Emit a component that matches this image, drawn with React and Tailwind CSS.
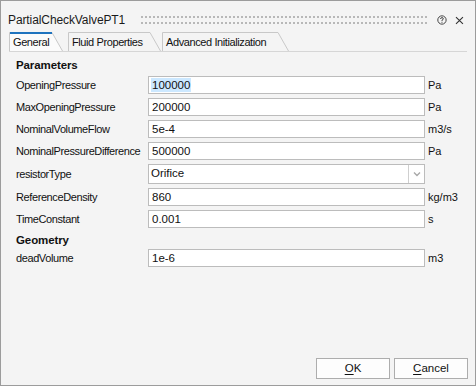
import React from 'react';

const rows = [
  { label: 'OpeningPressure', value: '100000', unit: 'Pa', selected: true },
  { label: 'MaxOpeningPressure', value: '200000', unit: 'Pa' },
  { label: 'NominalVolumeFlow', value: '5e-4', unit: 'm3/s' },
  { label: 'NominalPressureDifference', value: '500000', unit: 'Pa' },
  { label: 'resistorType', value: 'Orifice', combo: true },
  { label: 'ReferenceDensity', value: '860', unit: 'kg/m3' },
  { label: 'TimeConstant', value: '0.001', unit: 's' },
];

const Tab = ({ label, width, active, className }) => (
  <div className={`relative h-[19px] shrink-0 ${className}`} style={{ width }}>
    <svg className="absolute inset-0" width={width} height="19">
      <path
        d={`M0.5 19 V0.5 H${width - 11} L${width - 0.5} 19`}
        fill={active ? '#fbfbfb' : 'none'}
        stroke="#c8c8c8"
      />
      {active && <rect x="1" y="0" width={width - 12} height="2" fill="#1e73be" />}
    </svg>
    <span className="relative block pl-[4px] pt-[3px] text-[11px] leading-[14px] tracking-[-0.4px]">{label}</span>
  </div>
);

const Row = ({ row }) => (
  <div className={`flex items-start ${row.combo ? 'h-[24px]' : 'h-[22px]'}`}>
    <div className={`w-[132px] flex items-center text-[11px] tracking-[-0.4px] ${row.combo ? 'h-[20px]' : 'h-[18px]'}`}>{row.label}</div>
    {row.combo ? (
      <div className="w-[277px] h-[20px] border border-[#bcbcbc] bg-white flex items-center">
        <span className="flex-1 pl-[2px] text-[11.5px]">{row.value}</span>
        <div className="w-[16px] h-[18px] border-l border-[#cfcfcf] flex items-center justify-center">
          <svg width="8" height="6" viewBox="0 0 8 6">
            <path d="M1 1.5 L4 4.5 L7 1.5" fill="none" stroke="#a8a8a8" strokeWidth="1.4" />
          </svg>
        </div>
      </div>
    ) : (
      <div className="w-[277px] h-[18px] border border-[#bcbcbc] bg-white flex items-center pl-[2px]">
        <span className={`text-[11.5px] leading-[14px] px-[1px] ${row.selected ? 'bg-[#cce8ff]' : ''}`}>{row.value}</span>
      </div>
    )}
    {row.unit && <div className="h-[18px] ml-[3px] flex items-center text-[11px]">{row.unit}</div>}
  </div>
);

export default function App() {
  return (
    <div className="w-[476px] h-[386px] border border-[#9c9c9c] bg-[#f4f4f4] flex flex-col text-[#111] font-['Liberation_Sans',Arial,sans-serif]">
      {/* title bar */}
      <div className="h-[31px] shrink-0 flex items-center pt-[7px] pl-[7px] pr-[11px]">
        <span className="text-[12px] tracking-[-0.1px] text-[#1a1a1a]">PartialCheckValvePT1</span>
        <svg className="ml-[16px] mr-[8px]" width="290" height="9">
          <defs>
            <pattern id="grip" width="4" height="6" patternUnits="userSpaceOnUse">
              <rect x="0" y="0" width="2" height="2" fill="#b8b8b8" />
            </pattern>
          </defs>
          <rect x="0" y="0" width="290" height="9" fill="url(#grip)" />
        </svg>
        <svg width="10" height="10" viewBox="0 0 10 10" className="mr-[8px]">
          <circle cx="5" cy="5" r="4.2" fill="none" stroke="#444" strokeWidth="1" />
          <path d="M3.6 4 Q3.6 2.6 5 2.6 Q6.4 2.6 6.4 3.8 Q6.4 4.6 5 5.2 V6" fill="none" stroke="#444" strokeWidth="1" />
          <rect x="4.5" y="6.8" width="1" height="1" fill="#444" />
        </svg>
        <svg width="9" height="9" viewBox="0 0 9 9">
          <path d="M1 1 L8 8 M8 1 L1 8" stroke="#333" strokeWidth="1.1" />
        </svg>
      </div>

      {/* tabs */}
      <div className="h-[20px] shrink-0 mx-[8px] border-b border-[#d6d6d6] flex items-start">
        <Tab label="General" width={54} active />
        <Tab label="Fluid Properties" width={93} className="ml-[5px]" />
        <Tab label="Advanced Initialization" width={127} className="ml-[1px]" />
      </div>

      {/* content */}
      <div className="pl-[15px] flex flex-col">
        <div className="h-[24px] pt-[4px] flex items-center text-[11.5px] font-bold tracking-[-0.1px]">Parameters</div>
        {rows.map((r) => (
          <Row key={r.label} row={r} />
        ))}
        <div className="h-[17px] flex items-center pt-[1px] text-[11.5px] font-bold tracking-[-0.1px]">Geometry</div>
        <Row row={{ label: 'deadVolume', value: '1e-6', unit: 'm3' }} />
      </div>

      {/* buttons */}
      <div className="mt-auto flex justify-end gap-[4px] pr-[7px] pb-[6px]">
        <button className="w-[74px] h-[21px] border border-[#adadad] bg-[#fdfdfd] text-[11.5px] flex items-center justify-center">
          <span className="underline underline-offset-2">O</span>K
        </button>
        <button className="w-[74px] h-[21px] border border-[#adadad] bg-[#fdfdfd] text-[11.5px] flex items-center justify-center">
          <span className="underline underline-offset-2">C</span>ancel
        </button>
      </div>
    </div>
  );
}
